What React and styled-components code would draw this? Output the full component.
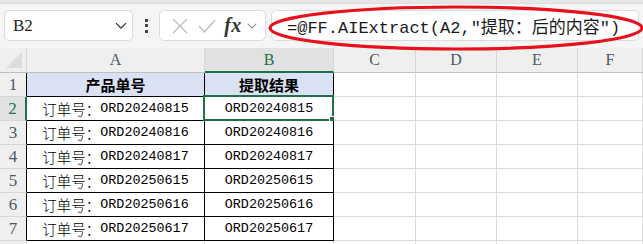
import React from "react"
import styled, { createGlobalStyle } from "styled-components"

const GREEN = "#1e7145"

const GlobalStyle = createGlobalStyle`
  html, body {
    margin: 0;
    padding: 0;
    background: #f5f5f5;
    overflow: hidden;
  }
`

const Page = styled.div`
  width: 643px;
  height: 244px;
  overflow: hidden;
  display: flex;
  flex-direction: column;
  background: #f5f5f5;
`

const TopStrip = styled.div`
  height: 3px;
  background: #e6e6e6;
  border-bottom: 1px solid #dedede;
  flex: none;
`

const Toolbar = styled.div`
  position: relative;
  height: 44px;
  flex: none;
  display: flex;
  align-items: flex-start;
  padding: 6px 0 0 4px;
  box-sizing: border-box;
`

const Box = styled.div`
  height: 31px;
  box-sizing: border-box;
  background: #fff;
  border: 1px solid #dcdcdc;
  border-radius: 5px;
  display: flex;
  align-items: center;
`

const NameBox = styled(Box)`
  width: 129px;
  padding: 0 5px 0 8px;
  justify-content: space-between;
  font-family: "Liberation Serif", serif;
  font-size: 17px;
  color: #222;
`

const Dots = styled.div`
  width: 26px;
  height: 31px;
  display: flex;
  flex-direction: column;
  align-items: center;
  justify-content: center;
  gap: 2.5px;

  span {
    width: 3px;
    height: 3px;
    background: #444;
  }
`

const ButtonGroup = styled(Box)`
  width: 107px;
  padding: 0 6px 0 7px;
`

const IconSlot = styled.div`
  width: ${({ $w }) => $w}px;
  display: flex;
  align-items: center;
  justify-content: center;
`

const Fx = styled.span`
  font-family: "Liberation Serif", serif;
  font-style: italic;
  font-weight: bold;
  font-size: 20px;
  color: #333;
  letter-spacing: 0.5px;
`

const FormulaBox = styled(Box)`
  margin-left: 5px;
  width: 368px;
  padding-left: 15px;
  font-family: "Liberation Mono", "Noto Sans CJK SC", monospace;
  font-size: 17px;
  color: #1a1a1a;
  white-space: nowrap;
`

const Ring = styled.svg`
  position: absolute;
  left: 267px;
  top: -3px;
  pointer-events: none;
`

const Sheet = styled.div`
  display: grid;
  grid-template-columns: 27px 178px 129px 82px 81px 81px 65px;
  grid-template-rows: 25px repeat(8, 24px);
  background: #fff;
  flex: none;
`

const Corner = styled.div`
  position: relative;
  background: #efefef;
  border-right: 1px solid #dadada;
  border-bottom: 1px solid #bfbfbf;

  &::after {
    content: "";
    position: absolute;
    right: 4px;
    bottom: 4px;
    width: 0;
    height: 0;
    border-left: 16px solid transparent;
    border-bottom: 16px solid #dcdcdc;
  }
`

const ColHead = styled.div`
  background: ${({ $on }) => ($on ? "#e1e1e1" : "#efefef")};
  border-right: 1px solid #d6d6d6;
  border-bottom: ${({ $on }) => ($on ? `2px solid ${GREEN}` : "1px solid #bfbfbf")};
  display: flex;
  align-items: center;
  justify-content: center;
  font-family: "Liberation Serif", serif;
  font-size: 16px;
  color: ${({ $on }) => ($on ? GREEN : "#4d5866")};
  box-sizing: border-box;
`

const RowHead = styled.div`
  background: ${({ $on }) => ($on ? "#e1e1e1" : "#efefef")};
  border-bottom: 1px solid #d6d6d6;
  border-right: ${({ $on, $edge }) =>
    $on ? `2px solid ${GREEN}` : `1px solid ${$edge ? "#000" : "#d6d6d6"}`};
  display: flex;
  align-items: center;
  justify-content: center;
  font-family: "Liberation Serif", serif;
  font-size: 17px;
  color: ${({ $on }) => ($on ? GREEN : "#4d5866")};
  box-sizing: border-box;
`

const Cell = styled.div`
  position: relative;
  box-sizing: border-box;
  background: ${({ $head }) => ($head ? "#d9e1f2" : "#fff")};
  border-right: 1px solid ${({ $table }) => ($table ? "#000" : "#dadada")};
  border-bottom: 1px solid ${({ $table }) => ($table ? "#000" : "#dadada")};
  display: flex;
  align-items: center;
  justify-content: center;
  white-space: nowrap;
  font-family: ${({ $head }) =>
    $head ? `"Noto Sans CJK SC", sans-serif` : `"Liberation Mono", "Noto Sans CJK SC", monospace`};
  font-weight: ${({ $head }) => ($head ? 700 : 400)};
  font-size: ${({ $head }) => ($head ? "15px" : "13.4px")};
  color: #000;
`

const Label = styled.span`
  font-family: "Noto Sans CJK SC", sans-serif;
  font-weight: 300;
  font-size: 14.5px;
`

const Selection = styled.div`
  position: absolute;
  left: -2px;
  top: -2px;
  right: -1px;
  bottom: -1px;
  border: 2px solid ${GREEN};
  pointer-events: none;

  &::after {
    content: "";
    position: absolute;
    right: -4px;
    bottom: -4px;
    width: 5px;
    height: 5px;
    background: ${GREEN};
    border: 1px solid #fff;
  }
`

const columns = ["A", "B", "C", "D", "E", "F"]

const orders = [
  "ORD20240815",
  "ORD20240816",
  "ORD20240817",
  "ORD20250615",
  "ORD20250616",
  "ORD20250617",
]

function Chevron({ color = "#333", size = 12 }) {
  return (
    <svg width={size} height={size * 0.6} viewBox="0 0 12 7">
      <path d="M1 1l5 5 5-5" fill="none" stroke={color} strokeWidth="1.3" />
    </svg>
  )
}

// empty cells C..F of one row
const blankCells = (key) =>
  [0, 1, 2, 3].map((c) => <Cell key={`${key}-${c}`} />)

export default function App() {
  return (
    <>
      <GlobalStyle />
      <Page>
        <TopStrip />
        <Toolbar>
          <NameBox>
            <span>B2</span>
            <Chevron />
          </NameBox>
          <Dots>
            <span />
            <span />
            <span />
          </Dots>
          <ButtonGroup>
            <IconSlot $w={26}>
              <svg width="16" height="16" viewBox="0 0 16 16">
                <path d="M1 1l14 14M15 1L1 15" stroke="#bdbdbd" strokeWidth="1.4" />
              </svg>
            </IconSlot>
            <IconSlot $w={28}>
              <svg width="18" height="14" viewBox="0 0 18 14">
                <path d="M1 7l5.5 6L17 1" fill="none" stroke="#bdbdbd" strokeWidth="1.4" />
              </svg>
            </IconSlot>
            <IconSlot $w={24}>
              <Fx>fx</Fx>
            </IconSlot>
            <IconSlot $w={14}>
              <Chevron color="#888" size={10} />
            </IconSlot>
          </ButtonGroup>
          <FormulaBox>=@FF.AIExtract(A2,"提取：后的内容")</FormulaBox>
          <Ring width="380" height="50" viewBox="0 0 380 50">
            <ellipse cx="189" cy="27" rx="186" ry="21" fill="none" stroke="#e8101a" strokeWidth="3.2" />
          </Ring>
        </Toolbar>
        <Sheet>
          <Corner />
          {columns.map((c) => (
            <ColHead key={c} $on={c === "B"}>{c}</ColHead>
          ))}

          <RowHead $edge>1</RowHead>
          <Cell $table $head>产品单号</Cell>
          <Cell $table $head>提取结果</Cell>
          {blankCells("r1")}

          {orders.map((o, i) => (
            <React.Fragment key={o}>
              <RowHead $edge $on={i === 0}>{i + 2}</RowHead>
              <Cell $table>
                <Label>订单号：</Label>
                {o}
              </Cell>
              <Cell $table>
                {o}
                {i === 0 && <Selection />}
              </Cell>
              {blankCells(o)}
            </React.Fragment>
          ))}

          {/* next row only peeks in at the bottom edge */}
          <RowHead />
          <Cell />
          <Cell />
          {blankCells("r8")}
        </Sheet>
      </Page>
    </>
  )
}
